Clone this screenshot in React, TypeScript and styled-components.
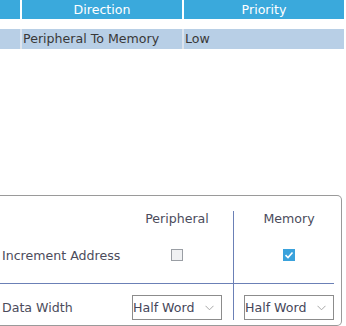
import styled, { createGlobalStyle } from "styled-components";

const GlobalStyle = createGlobalStyle`
  html, body {
    margin: 0;
    padding: 0;
    background: #ffffff;
    font-family: "DejaVu Sans", Verdana, sans-serif;
    font-size: 12.6px;
  }
`;

const Page = styled.div`
  width: 346px;
  height: 326px;
  overflow: hidden;
  display: flex;
  flex-direction: column;
`;

const TableArea = styled.div`
  height: 195px;
  display: flex;
  flex-direction: column;
`;

const Row = styled.div<{ $head?: boolean }>`
  display: grid;
  grid-template-columns: 20px 160px 160px;
  column-gap: 2px;
  width: 344px;
  height: ${(p) => (p.$head ? "18px" : "19px")};
  margin-top: ${(p) => (p.$head ? "0" : "11px")};
  background: ${(p) => (p.$head ? "#ffffff" : "#dce4ee")};
  border-bottom: ${(p) => (p.$head ? "none" : "1px solid #e2e2e2")};
`;

const HeadCell = styled.div`
  background: #3aa9dc;
  color: #ffffff;
  text-align: center;
  line-height: 19px;
  white-space: nowrap;
`;

const Cell = styled.div`
  background: #b8cfe6;
  color: #383838;
  line-height: 20px;
  padding-left: 1px;
  white-space: nowrap;
`;

const Panel = styled.div`
  width: 343px;
  height: 131px;
  box-sizing: border-box;
  margin-left: -1px;
  border: 1px solid #9a9a9a;
  border-left: none;
  border-radius: 0 5px 5px 0;
  padding-top: 15px;
`;

const Grid = styled.div`
  display: grid;
  grid-template-columns: 122px 112px 101px;
  width: 335px;
`;

const Label = styled.div<{ $rule?: boolean; $top?: number }>`
  color: #4c4c5c;
  padding-left: 3px;
  display: flex;
  align-items: ${(p) => (p.$top ? "flex-start" : "center")};
  padding-top: ${(p) => (p.$top ? `${p.$top}px` : "0")};
  line-height: ${(p) => (p.$top ? "25px" : "normal")};
  white-space: nowrap;
  border-bottom: ${(p) => (p.$rule ? "1px solid #6b80b6" : "none")};
`;

const ColCell = styled.div<{ $memory?: boolean; $rule?: boolean; $top?: number; $h: number }>`
  height: ${(p) => p.$h}px;
  box-sizing: content-box;
  display: flex;
  justify-content: center;
  align-items: ${(p) => (p.$top ? "flex-start" : "center")};
  padding-top: ${(p) => (p.$top ? `${p.$top}px` : "0")};
  padding-left: ${(p) => (p.$memory ? "10px" : "0")};
  border-left: ${(p) => (p.$memory ? "1px solid #6b80b6" : "none")};
  border-bottom: ${(p) => (p.$rule ? "1px solid #6b80b6" : "none")};
  color: #4c4c5c;
  line-height: 16px;
`;

const Box = styled.span<{ $checked?: boolean }>`
  width: 12px;
  height: 12px;
  box-sizing: border-box;
  display: flex;
  align-items: center;
  justify-content: center;
  background: ${(p) => (p.$checked ? "#3aa2dc" : "#f0f1f3")};
  border: 1px solid ${(p) => (p.$checked ? "#3aa2dc" : "#9a9ea4")};
`;

const Select = styled.div`
  width: 90px;
  height: 25px;
  box-sizing: border-box;
  border: 1px solid #8c8c8c;
  display: flex;
  align-items: center;
  justify-content: space-between;
  padding: 0 7px 0 0;
  color: #46465a;
  background: #ffffff;
  white-space: nowrap;
`;

const Check = () => (
  <svg width="10" height="10" viewBox="0 0 10 10">
    <path d="M1.5 5.2 L4 7.5 L8.5 2.5" fill="none" stroke="#ffffff" strokeWidth="1.6" />
  </svg>
);

const Chevron = () => (
  <svg width="9" height="6" viewBox="0 0 9 6">
    <path d="M0.5 0.8 L4.5 4.8 L8.5 0.8" fill="none" stroke="#a8a8a8" strokeWidth="1" />
  </svg>
);

export default function App() {
  return (
    <Page>
      <GlobalStyle />
      <TableArea>
        <Row $head>
          <HeadCell />
          <HeadCell>Direction</HeadCell>
          <HeadCell>Priority</HeadCell>
        </Row>
        <Row>
          <Cell />
          <Cell>Peripheral To Memory</Cell>
          <Cell>Low</Cell>
        </Row>
      </TableArea>
      <Panel>
        <Grid>
          <Label />
          <ColCell $h={16}>Peripheral</ColCell>
          <ColCell $h={16} $memory>Memory</ColCell>

          <Label $rule>Increment Address</Label>
          <ColCell $h={56} $rule>
            <Box />
          </ColCell>
          <ColCell $h={56} $rule $memory>
            <Box $checked>
              <Check />
            </Box>
          </ColCell>

          <Label $top={11}>Data Width</Label>
          <ColCell $h={25} $top={11}>
            <Select>
              Half Word
              <Chevron />
            </Select>
          </ColCell>
          <ColCell $h={25} $top={11} $memory>
            <Select>
              Half Word
              <Chevron />
            </Select>
          </ColCell>
        </Grid>
      </Panel>
    </Page>
  );
}
